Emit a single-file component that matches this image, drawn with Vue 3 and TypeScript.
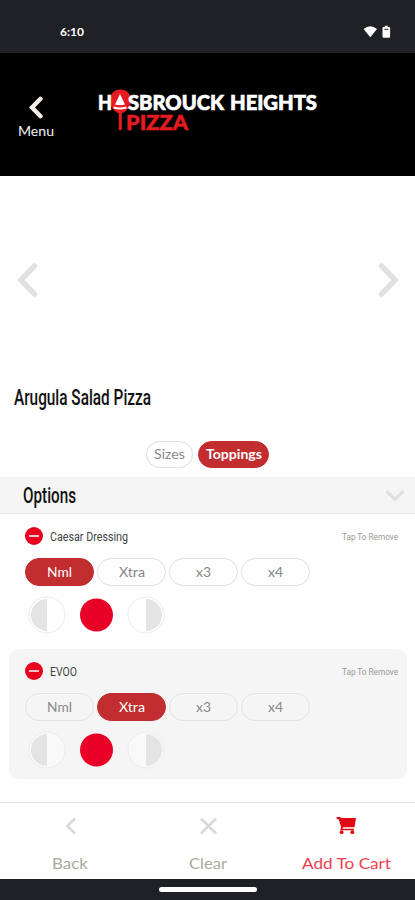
<script setup lang="ts">
import { h, ref } from 'vue'

interface FitProps {
  text: string
  w: number
  size: number
}

// Text set to an exact width, for condensed and extended lettering.
const FitText = (props: FitProps) =>
  h('svg', { width: props.w, height: Math.ceil(props.size * 1.3), overflow: 'visible', style: 'display:block;flex:none' }, [
    h(
      'text',
      {
        x: 0,
        y: props.size,
        'font-size': props.size,
        textLength: props.w,
        lengthAdjust: 'spacingAndGlyphs',
        fill: 'currentColor',
      },
      props.text,
    ),
  ])
FitText.props = ['text', 'w', 'size']

interface Topping {
  name: string
  width: number
  amount: number
}

const amounts = [
  { label: 'Nml', width: 25 },
  { label: 'Xtra', width: 26 },
  { label: 'x3', width: 15 },
  { label: 'x4', width: 15 },
]
const toppings = ref<Topping[]>([
  { name: 'Caesar Dressing', width: 78, amount: 0 },
  { name: 'EVOO', width: 27, amount: 1 },
])
</script>

<template>
  <div class="screen">
    <div class="status">
      <FitText class="time" text="6:10" :w="24" :size="12" />
      <svg class="system" width="28" height="14" viewBox="0 0 28 14">
        <path d="M.6 4.100Q7.300-1.800 14 4.100L7.300 12.200Z" fill="#fff" />
        <path d="M20.500 2h1.300V.7h3V2h1.300q1 0 1 1v8.700q0 1-1 1h-5.600q-1 0-1-1V3q0-1 1-1Z" fill="#fff" />
        <path d="M21.300 4.300h4" stroke="#202124" stroke-width="1" />
      </svg>
    </div>

    <header class="header">
      <button class="menu">
        <svg width="16" height="23" viewBox="0 0 16 23"><path d="M12.500 2.800 4 11.500l8.500 8.700" fill="none" stroke="#f7eee5" stroke-width="4.400" stroke-linecap="round" /></svg>
        <FitText text="Menu" :w="36" :size="13.5" />
      </button>
      <svg class="logo" width="222" height="46" viewBox="0 0 222 46">
        <path d="M23.500 .5C17 .5 13 5 13 11.500c0 5.500 3.500 11 8.800 12.700V41h3V24.200C30 22.500 34 17.500 34 11.500 34 5 30 .5 23.500 .5Z" fill="#e51b20" />
        <text x="1" y="20.500" font-size="21.500" textLength="14" lengthAdjust="spacingAndGlyphs" fill="#fff" stroke="#fff" stroke-width=".7">H</text>
        <text x="31" y="20.500" font-size="21.500" textLength="96" lengthAdjust="spacingAndGlyphs" fill="#fff" stroke="#fff" stroke-width=".7">SBROUCK</text>
        <text x="133" y="20.500" font-size="21.500" textLength="87" lengthAdjust="spacingAndGlyphs" fill="#fff" stroke="#fff" stroke-width=".7">HEIGHTS</text>
        <text x="29" y="41" font-size="21" textLength="62" lengthAdjust="spacingAndGlyphs" fill="#e51b20" stroke="#e51b20" stroke-width=".5">PIZZA</text>
        <path d="M23 5 28 15.500q-5 1.600-10 0ZM17 17.500q6 2 12 0l.8 2q-6.800 2.200-13.600 0Z" fill="#fff" />
      </svg>
    </header>

    <section class="gallery">
      <svg width="22" height="36" viewBox="0 0 22 36"><path d="M17.500 4 4 18l13.500 14" fill="none" stroke="#e0e0de" stroke-width="5.400" stroke-linecap="round" /></svg>
      <svg width="22" height="36" viewBox="0 0 22 36"><path d="M4.500 4 18 18 4.500 32" fill="none" stroke="#e0e0de" stroke-width="5.400" stroke-linecap="round" /></svg>
    </section>

    <h1 class="title"><FitText text="Arugula Salad Pizza" :w="137" :size="22" /></h1>

    <nav class="tabs">
      <button class="tab sizes"><FitText text="Sizes" :w="31" :size="12.5" /></button>
      <button class="tab active"><FitText text="Toppings" :w="56" :size="12.5" /></button>
    </nav>

    <div class="section">
      <FitText text="Options" :w="53" :size="22" />
      <svg width="20" height="13" viewBox="0 0 20 13"><path d="M1.500 2 10 10.500 18.500 2" fill="none" stroke="#e0e0e0" stroke-width="3.200" /></svg>
    </div>

    <main class="list">
      <article v-for="(topping, i) in toppings" :key="topping.name" class="card" :class="{ shaded: i % 2 === 1 }">
        <div class="heading">
          <svg width="18" height="18" viewBox="0 0 18 18"><circle cx="9" cy="9" r="9" fill="#e9001f" /><path d="M4 9h10" stroke="#fff" stroke-width="1.500" /></svg>
          <FitText class="name" :text="topping.name" :w="topping.width" :size="13.5" />
          <FitText class="remove" text="Tap To Remove" :w="56" :size="9.5" />
        </div>
        <div class="amounts">
          <button
            v-for="(amount, n) in amounts"
            :key="amount.label"
            class="pill"
            :class="{ active: topping.amount === n }"
            @click="topping.amount = n"
          >
            <FitText :text="amount.label" :w="amount.width" :size="12.5" />
          </button>
        </div>
        <div class="halves">
          <svg width="38" height="38" viewBox="0 0 38 38"><circle cx="19" cy="19" r="18" class="ring" /><path d="M19 3a16 16 0 0 0 0 32Z" fill="#e4e4e4" /></svg>
          <svg width="33" height="38" viewBox="0 0 33 38"><circle cx="16.500" cy="19" r="16.500" fill="#e90027" /></svg>
          <svg width="38" height="38" viewBox="0 0 38 38"><circle cx="19" cy="19" r="18" class="ring" /><path d="M19 3a16 16 0 0 1 0 32Z" fill="#e4e4e4" /></svg>
        </div>
      </article>
    </main>

    <footer class="actions">
      <button class="action">
        <svg width="20" height="20" viewBox="0 0 20 20"><path d="M15 2.500 7.500 10l7.500 7.500" fill="none" stroke="#d9d9d9" stroke-width="2.600" /></svg>
        <FitText text="Back" :w="36" :size="15.5" />
      </button>
      <button class="action">
        <svg class="clear" width="20" height="20" viewBox="0 0 20 20"><path d="m3 2.500 15 15m0-15-15 15" fill="none" stroke="#d9d9d9" stroke-width="2.700" /></svg>
        <FitText text="Clear" :w="38" :size="15.5" />
      </button>
      <button class="action cart">
        <svg width="20" height="20" viewBox="0 0 20 20">
          <path d="M.5 1h3.700l.9 1H20l-1.500 9.300H7l-.3 1.400h11.300v1.500H4.200l1-3L2.800 3.500.5 2.500Z" fill="#e30613" />
          <circle cx="5.600" cy="16.200" r="1.900" fill="#e30613" /><circle cx="16.300" cy="16.200" r="1.900" fill="#e30613" />
        </svg>
        <FitText text="Add To Cart" :w="89" :size="15.5" />
      </button>
    </footer>
    <div class="system-nav"><span></span></div>
  </div>
</template>

<style>
body {
  margin: 0;
  background: #fff;
}
</style>

<style scoped>
.screen {
  width: 415px;
  height: 900px;
  display: flex;
  flex-direction: column;
  overflow: hidden;
  background: #fefefe;
  font-family: Lato, "Open Sans", sans-serif;
}
.screen > * {
  box-sizing: border-box;
  flex: none;
}
button {
  border: 0;
  padding: 0;
  background: none;
  font: inherit;
  color: inherit;
}
.status {
  height: 53px;
  padding: 24px 24px 0 60px;
  display: flex;
  justify-content: space-between;
  background: #202124;
  color: #fff;
}
.time {
  font-weight: 700;
}
.system {
  margin-top: 1px;
}
.header {
  height: 123px;
  padding: 43px 0 0 18px;
  display: flex;
  align-items: flex-start;
  background: #000;
  color: #f2f2f2;
}
.menu {
  width: 36px;
  display: flex;
  flex-direction: column;
  align-items: center;
  gap: 3px;
}
.logo {
  margin: -7px 0 0 43px;
  font-family: Lato, sans-serif;
  font-weight: 900;
}
.gallery {
  height: 208px;
  padding: 0 16px 0 17px;
  display: flex;
  align-items: center;
  justify-content: space-between;
}
.title {
  height: 57px;
  margin: 0;
  padding: 0 14px;
  font-family: Roboto, sans-serif;
  font-weight: 500;
  color: #111;
}
.title > svg {
  margin-top: -1px;
}
.tabs {
  height: 36px;
  display: flex;
  justify-content: center;
  gap: 5px;
}
.tab,
.pill {
  box-sizing: border-box;
  display: flex;
  align-items: center;
  justify-content: center;
  border: 1px solid #dedede;
  border-radius: 14px;
  color: #888;
}
.tab {
  width: 71px;
  height: 27px;
}
.sizes {
  width: 47px;
}
.active {
  border-color: #c22d30;
  background: #c22d30;
  color: #fff;
  font-weight: 700;
}
.section {
  height: 37px;
  padding: 4px 10px 0 23px;
  display: flex;
  justify-content: space-between;
  background: #f5f5f5;
  border-bottom: 1px solid #e6e6e6;
  font-family: Roboto, sans-serif;
  font-weight: 500;
  color: #111;
}
.section > svg:last-child {
  margin-top: 8px;
}
.list {
  height: 288px;
  padding: 0 8px 0 9px;
  display: flex;
  flex-direction: column;
  gap: 5px;
}
.card {
  box-sizing: border-box;
  height: 130px;
  padding: 13px 9px 0 16px;
  border-radius: 10px;
}
.shaded {
  background: #f5f5f5;
}
.heading {
  height: 18px;
  display: flex;
  align-items: center;
  font-family: Roboto, sans-serif;
  color: #444;
}
.name {
  margin-left: 7px;
}
.remove {
  margin-left: auto;
  color: #999;
}
.amounts {
  margin-top: 13px;
  display: flex;
  gap: 3px;
}
.pill {
  width: 69px;
  height: 28px;
  border-color: #e2e2e2;
}
.pill.active {
  border-color: #c22d30;
  font-weight: 400;
}
.halves {
  margin: 10px 0 0 3px;
  display: flex;
  gap: 14px;
}
.ring {
  fill: #fff;
  stroke: #ececec;
  stroke-width: 1;
}
.shaded .ring {
  fill: #f9f9f9;
}
.actions {
  height: 77px;
  display: grid;
  grid-template-columns: repeat(3, 1fr);
  border-top: 1px solid #e5e5e5;
  background: #fff;
  color: #aaaaa0;
}
.action {
  padding: 13px 0 0 1px;
  display: flex;
  flex-direction: column;
  align-items: center;
  gap: 17px;
}
.cart {
  color: #ea4150;
}
.system-nav {
  height: 21px;
  padding-top: 8px;
  display: flex;
  justify-content: center;
  background: #202124;
}
.system-nav span {
  width: 98px;
  height: 5px;
  border-radius: 3px;
  background: #fff;
}
</style>
